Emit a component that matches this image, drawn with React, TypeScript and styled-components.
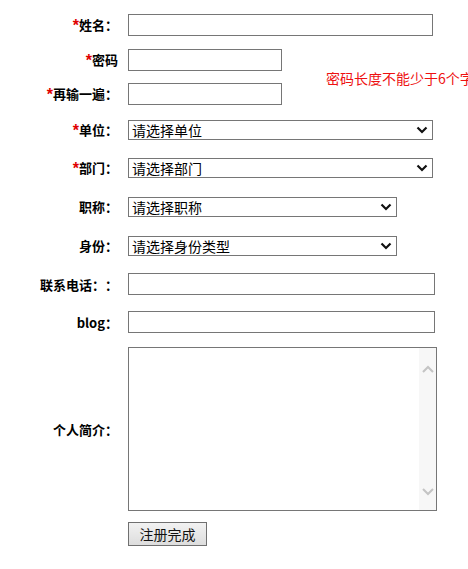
import styled, { createGlobalStyle } from "styled-components";

const GlobalStyle = createGlobalStyle`
html, body {
  margin: 0;
  padding: 0;
  overflow: hidden;
  background: #ffffff;
  font-family: "Noto Sans CJK SC", "Liberation Sans", sans-serif;
  color: #000;
  text-spacing-trim: space-all;
}
`;

const chevron = encodeURIComponent(
  `<svg xmlns="http://www.w3.org/2000/svg" width="12" height="8" viewBox="0 0 12 8"><path d="M1.5 1.5 L6 6 L10.5 1.5" fill="none" stroke="#111" stroke-width="2.2"/></svg>`
);

const Form = styled.form`
display: grid;
grid-template-columns: 118px 154px 1fr;
grid-template-rows: 36px 34px 34px 37px 39px 39px 39px 38px 38px 176px 34px;
column-gap: 10px;
padding-top: 7px;
width: 468px;
overflow: hidden;
align-items: center;
`;

const Label = styled.label`
grid-column: 1;
justify-self: end;
font-size: 13px;
font-weight: bold;
white-space: nowrap;
text-spacing-trim: space-all;
`;

const Star = styled.span`
color: #e00000;
font-family: "Liberation Sans", sans-serif;
font-weight: bold;
font-size: 16px;
vertical-align: -1px;
`;

const Field = styled.div<{ $wide?: boolean }>`
grid-column: ${(p) => (p.$wide ? "2 / 4" : "2")};
display: flex;
align-items: center;
`;

const TextInput = styled.input<{ $w: number }>`
box-sizing: border-box;
width: ${(p) => p.$w}px;
height: 22px;
margin: 0;
padding: 1px 3px;
border: 1px solid #767676;
font-size: 13px;
font-family: inherit;
outline: none;
`;

const Select = styled.select<{ $w: number }>`
box-sizing: border-box;
width: ${(p) => p.$w}px;
height: 20px;
margin: 0;
padding: 0 20px 0 3px;
border: 1px solid #767676;
border-radius: 0;
background: #fff url("data:image/svg+xml,${chevron}") no-repeat right 4px center;
appearance: none;
font-size: 14px;
line-height: 18px;
font-family: inherit;
color: #000;
outline: none;
`;

const ErrorMsg = styled.span`
grid-column: 3;
grid-row: 2 / 4;
align-self: center;
padding-left: 34px;
padding-top: 2px;
color: #ee1111;
font-size: 14px;
white-space: nowrap;
`;

const AreaBox = styled.div`
box-sizing: border-box;
width: 309px;
height: 164px;
border: 1px solid #767676;
display: flex;
background: #fff;
`;

const TextArea = styled.textarea`
flex: 1;
border: 0;
margin: 0;
padding: 2px;
resize: none;
outline: none;
font-family: inherit;
font-size: 13px;
overflow: hidden;
`;

const ScrollTrack = styled.div`
width: 17px;
background: #f7f7f7;
display: flex;
flex-direction: column;
justify-content: space-between;
align-items: center;
padding: 17px 0 14px;
`;

const Button = styled.button`
box-sizing: border-box;
width: 79px;
height: 24px;
margin: 0;
padding: 0;
border: 1px solid #707070;
background: linear-gradient(#f2f2f2, #dddddd);
font-family: inherit;
font-size: 14px;
color: #111;
`;

const Arrow = ({ up }: { up?: boolean }) => (
  <svg width="12" height="8" viewBox="0 0 12 8">
    <path
      d={up ? "M1 7 L6 2 L11 7" : "M1 1 L6 6 L11 1"}
      fill="none"
      stroke="#c4c4c4"
      strokeWidth="2"
    />
  </svg>
);

export default function App() {
  return (
    <>
      <GlobalStyle />
      <Form onSubmit={(e) => e.preventDefault()}>
        <Label><Star>*</Star>姓名：</Label>
        <Field $wide><TextInput $w={305} /></Field>

        <Label><Star>*</Star>密码</Label>
        <Field><TextInput $w={154} type="password" /></Field>
        <ErrorMsg>密码长度不能少于6个字符</ErrorMsg>

        <Label><Star>*</Star>再输一遍：</Label>
        <Field><TextInput $w={154} type="password" /></Field>

        <Label><Star>*</Star>单位：</Label>
        <Field $wide>
          <Select $w={305}><option>请选择单位</option></Select>
        </Field>

        <Label><Star>*</Star>部门：</Label>
        <Field $wide>
          <Select $w={305}><option>请选择部门</option></Select>
        </Field>

        <Label>职称：</Label>
        <Field $wide>
          <Select $w={269}><option>请选择职称</option></Select>
        </Field>

        <Label>身份：</Label>
        <Field $wide>
          <Select $w={269}><option>请选择身份类型</option></Select>
        </Field>

        <Label>联系电话：：</Label>
        <Field $wide><TextInput $w={307} /></Field>

        <Label>blog：</Label>
        <Field $wide><TextInput $w={307} /></Field>

        <Label>个人简介：</Label>
        <Field $wide>
          <AreaBox>
            <TextArea />
            <ScrollTrack>
              <Arrow up />
              <Arrow />
            </ScrollTrack>
          </AreaBox>
        </Field>

        <Field $wide><Button type="submit">注册完成</Button></Field>
      </Form>
    </>
  );
}
